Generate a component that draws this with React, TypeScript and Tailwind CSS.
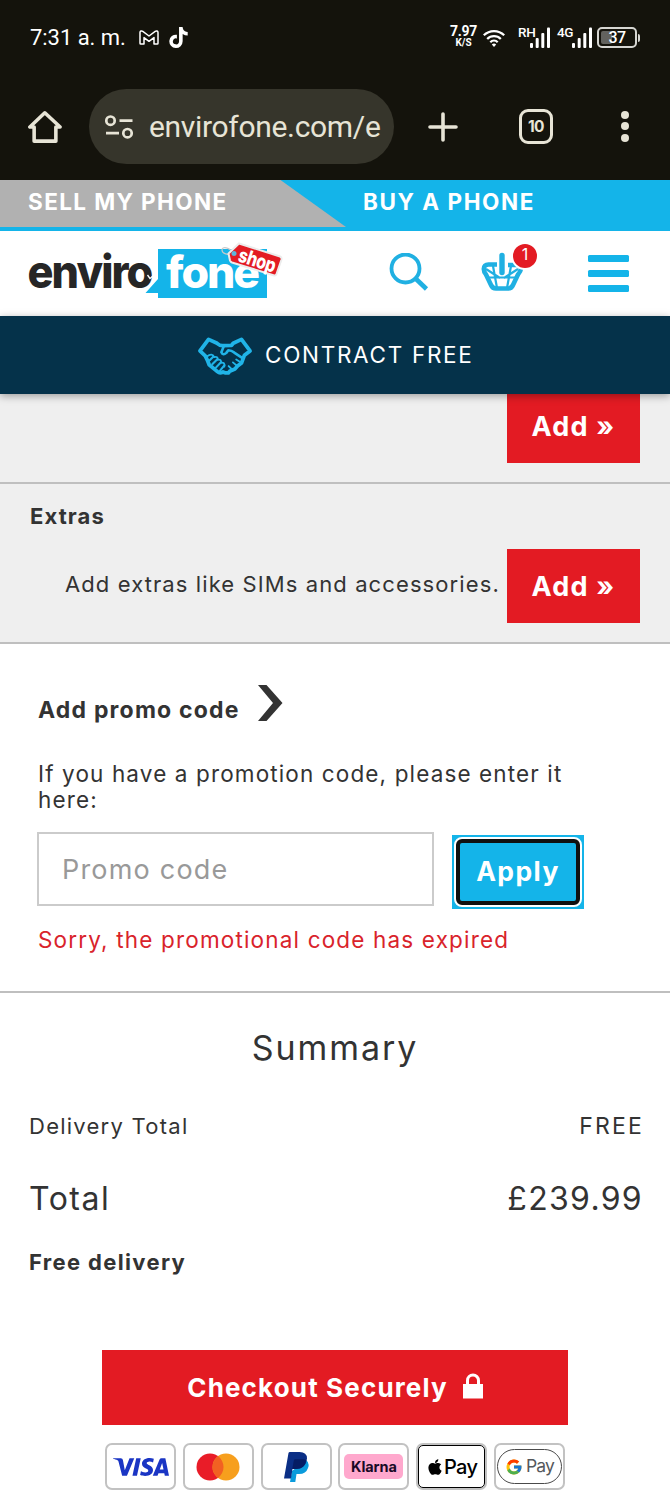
import type { ReactNode } from "react";
import { FaApple, FaTiktok } from "react-icons/fa";
import { FcGoogle } from "react-icons/fc";
import { SiVisa } from "react-icons/si";

const Signal = ({ label, className }: { label: string; className: string }) => (
  <div className={`relative h-[21px] ${className}`}>
    <span className="absolute left-0 top-0 text-[13.5px] leading-[11px] tracking-[-0.3px] font-medium">
      {label}
    </span>
    <svg
      viewBox="0 0 20 21"
      fill="currentColor"
      className="absolute right-0 bottom-0 w-5 h-[21px]"
    >
      <rect x="0" y="16" width="3" height="5" rx="1" />
      <rect x="5.7" y="11" width="3" height="10" rx="1" />
      <rect x="11.3" y="6" width="3" height="15" rx="1" />
      <rect x="17" y="0.5" width="3" height="20.5" rx="1" />
    </svg>
  </div>
);

const StatusBar = () => (
  <div className="flex h-[75px] items-center pl-[30px] pr-[30px] text-white">
    <span className="w-[109px] text-[22px] leading-[26px] tracking-[-0.05px] whitespace-nowrap">
      7:31 a. m.
    </span>
    <svg
      viewBox="0 0 20 15"
      fill="none"
      stroke="currentColor"
      strokeWidth="1.5"
      strokeLinejoin="round"
      className="w-5 h-[15px]"
    >
      <path d="M1 13.2V2.6C1 1 2.6.5 3.8 1.4L10 6l6.2-4.6C17.4.5 19 1 19 2.6V13.2q0 .8-.8.8H15V7.6L10 11.3 5 7.6V14H1.8Q1 14 1 13.2Z" />
    </svg>
    <FaTiktok className="ml-[10px] w-[19px] h-[21px]" />
    <div className="ml-auto flex items-center">
      <div className="w-[27px] pb-[3px] text-center font-bold">
        <div className="text-[14px] leading-[13px] tracking-[-0.3px]">7.97</div>
        <div className="text-[10px] leading-[9px]">K/S</div>
      </div>
      <svg
        viewBox="0 0 22 18"
        fill="none"
        stroke="currentColor"
        strokeWidth="2.3"
        className="ml-[6px] w-[22px] h-[18px]"
      >
        <path d="M.8 6.3a14.5 14.5 0 0 1 20.4 0M4.2 10a9.7 9.7 0 0 1 13.6 0M7.3 13.2a5.3 5.3 0 0 1 7.4 0" />
        <path d="m11 18-2.200-2.400a3 3 0 0 1 4.400 0Z" fill="currentColor" stroke="none" />
      </svg>
      <Signal label="RH" className="ml-[13px] w-[32px]" />
      <Signal label="4G" className="ml-[7px] w-[35px]" />
      <div className="relative ml-[5px] flex h-[21px] w-[40px] items-center justify-center rounded-[5px] border-2 border-[#d6d6d2]">
        <span className="absolute left-[2px] top-[2px] h-[13px] w-[11px] rounded-[2px] bg-[#62625e]" />
        <span className="relative text-[16px] leading-none font-medium tracking-[-0.5px]">37</span>
      </div>
      <span className="ml-px h-[8px] w-[2px] rounded-r bg-[#d6d6d2]" />
    </div>
  </div>
);

const BrowserBar = () => (
  <div className="flex h-[105px] items-start pl-[28px] pt-[14px] text-[#e7e4d6]">
    <svg
      viewBox="0 0 36 36"
      fill="none"
      stroke="currentColor"
      strokeWidth="3.8"
      strokeLinejoin="round"
      className="mt-[20px] w-[34px] h-[35px]"
    >
      <path d="M2 18.5h4.5V33.5h23V18.5H34L17.8 3.500Z" />
    </svg>
    <div className="ml-[27px] flex h-[75px] w-[305px] items-center rounded-full bg-[#36352b] pl-[16px]">
      <svg
        viewBox="0 0 28 24"
        fill="none"
        stroke="currentColor"
        strokeWidth="2.7"
        className="w-[28px] h-[24px]"
      >
        <circle cx="5.5" cy="5.7" r="4.2" />
        <circle cx="22.5" cy="18.2" r="4.2" />
        <path d="M14.500 5.700H27.500M1 18.200h13" />
      </svg>
      <span className="ml-[16px] text-[30px] leading-[40px] tracking-[-0.32px] whitespace-nowrap">
        envirofone.com/e
      </span>
    </div>
    <svg
      viewBox="0 0 30 30"
      stroke="currentColor"
      strokeWidth="3.6"
      strokeLinecap="round"
      className="ml-[34px] mt-[23px] w-[30px] h-[30px]"
    >
      <path d="M15 2v26M2 15h26" />
    </svg>
    <div className="ml-[61px] mt-[20px] flex h-[35px] w-[34px] items-center justify-center rounded-[9px] border-[3.5px] border-current font-[Inter] text-[15.5px] font-bold tracking-[-0.5px]">
      10
    </div>
    <div className="ml-[68px] mt-[22px] flex flex-col gap-[3.3px]">
      <span className="size-[8px] rounded-full bg-current" />
      <span className="size-[8px] rounded-full bg-current" />
      <span className="size-[8px] rounded-full bg-current" />
    </div>
  </div>
);

const ShopTabs = () => (
  <div className="relative flex h-[51px] border-b-4 border-[#14b4e9] bg-[#14b4e9] text-[22.5px] leading-[44px] font-bold text-white">
    <svg viewBox="0 0 346 47" className="absolute left-0 top-0 w-[346px] h-[47px]">
      <path d="M0 0h280.500L346 47H0Z" fill="#b1b1b1" />
    </svg>
    <span className="relative w-[335px] pl-[28px] tracking-[1.4px]">SELL MY PHONE</span>
    <span className="relative pl-[28px] tracking-[1.55px]">BUY A PHONE</span>
  </div>
);

const Logo = () => (
  <svg viewBox="0 0 256 60" className="w-[256px] h-[60px] overflow-visible font-[Inter]">
    <path d="M130 7h109v49H130v-5H117.500L130 37Z" fill="#14b4e9" />
    <text
      x="-0.5"
      y="46.3"
      fontSize="46"
      fontWeight="800"
      fill="#262626"
      stroke="#fff"
      strokeWidth="2"
      paintOrder="stroke"
      letterSpacing="-2"
      textLength="124"
      lengthAdjust="spacingAndGlyphs"
    >
      enviro
    </text>
    {/* arrow notch on the right side of the o */}
    <path d="m119.500 33 2.500 3.500 4-3.500" fill="none" stroke="#fff" strokeWidth="1.3" />
    <text
      x="138"
      y="46"
      fontSize="44"
      fontWeight="800"
      fill="#fff"
      letterSpacing="-2"
      textLength="92"
      lengthAdjust="spacingAndGlyphs"
    >
      fone
    </text>
    <path d="M207 12c-6-7-13-8-13-4s6 5 13 5" fill="none" stroke="#c9c9c9" strokeWidth="1.2" />
    <path
      d="m211 1.500 41 13q2 1 1.500 3l-5 14.500q-.7 2-3 1.300L204 20.500q-1.500-.5-2-2l-1.500-7Z"
      fill="#e31b23"
      stroke="#ececec"
      strokeWidth="2"
    />
    <circle cx="206" cy="11.500" r="2.5" fill="#5db5dc" />
    <text
      x="209"
      y="19"
      fontSize="20"
      fontWeight="800"
      fill="#fff"
      letterSpacing="-0.5"
      textLength="38"
      lengthAdjust="spacingAndGlyphs"
      transform="rotate(18 209 19)"
    >
      shop
    </text>
  </svg>
);

const ShopHeader = () => (
  <div className="flex h-[85px] items-start bg-white pl-[28px]">
    <div className="mt-[11px]">
      <Logo />
    </div>
    <svg
      viewBox="0 0 40 38"
      fill="none"
      stroke="#20b0e2"
      strokeWidth="3.8"
      className="ml-[105px] mt-[22px] w-[40px] h-[38px]"
    >
      <circle cx="16.5" cy="15.5" r="14" />
      <path d="m26 25 11.500 11" strokeWidth="4.6" />
    </svg>
    <div className="relative ml-[51px] mt-[20px]">
      <svg
        viewBox="0 0 44 40"
        fill="none"
        stroke="#20b0e2"
        strokeWidth="4.6"
        strokeLinejoin="round"
        className="w-[44px] h-[40px]"
      >
        <path d="M17 13.500H8.500q-4.700 0-4.700 4.500 0 3 2.200 5.500l5 10.500q1.500 3.500 5 3.500h12q3.500 0 5-3.500l5-10.500q2.700-3 3-6-1-3.500-4-3.500h-9" />
        <path d="M7 26.500h30M13 15l4 22M31 15l-4 22M6 18l14 9M38 18 24 27" strokeWidth="2.2" />
        <path d="M22 3v20" stroke="#fff" strokeWidth="8.5" />
        <path d="M22 4.500v17" strokeWidth="5.4" strokeLinecap="round" />
      </svg>
      <span className="absolute left-[33px] -top-[7.500px] flex size-[24px] items-center justify-center rounded-full bg-[#e31b23] pb-[3px] text-[16px] leading-none text-white ring-2 ring-white">
        1
      </span>
    </div>
    <div className="ml-[64px] mt-[24px] flex flex-col gap-[8px]">
      <span className="h-[7px] w-[41px] rounded-[1.5px] bg-[#14b4e9]" />
      <span className="h-[7px] w-[41px] rounded-[1.5px] bg-[#14b4e9]" />
      <span className="h-[7px] w-[41px] rounded-[1.5px] bg-[#14b4e9]" />
    </div>
  </div>
);

const Banner = () => (
  <div className="relative flex h-[78px] items-center bg-[#05324a] pl-[197px] text-[22.5px] text-white shadow-[0_2px_8px_rgba(0,0,0,0.35)]">
    <svg
      viewBox="50 60 170 122"
      fill="none"
      stroke="#20b4e8"
      strokeWidth="11.5"
      strokeLinejoin="round"
      strokeLinecap="round"
      className="w-[56px] h-[41px]"
    >
      <path d="m59 107 26-35 26 12q8 7 16 7l28-1 5-6 25-12 26 35-17 13-9 24-12 9-8 9-16 7-4 5h-8l-8-3q-10 5-17-1l-25-21-6-15-6-12Z" />
      <path d="m132 91-8 20q5 11 15 2l6-8q10 0 18 7l24 16" strokeWidth="8" />
      <path d="m100 124-13 13M111 133l-14 14M122 142l-14 15M133 151l-13 16" strokeWidth="6.5" />
      <path
        d="m80 124q16-12 22 2 12-4 11 8 12-2 10 9 13-2 10 12M181 141l-12-8M172 153l-13-11M158 165l-12-12"
        strokeWidth="5.5"
      />
    </svg>
    <span className="ml-[12px] tracking-[1.7px]">CONTRACT FREE</span>
  </div>
);

const RedButton = ({ children, className }: { children: ReactNode; className: string }) => (
  <button className={`bg-[#e31b23] font-bold text-white ${className}`}>{children}</button>
);

const Extras = () => (
  <div className="bg-[#efefef]">
    <div className="flex h-[90px] justify-end border-b-2 border-[#bfbfbf] pr-[30px]">
      <RedButton className="h-[69px] w-[133px] pb-[3px] text-[27px] tracking-[1.2px]">Add »</RedButton>
    </div>
    <div className="h-[160px] border-b-2 border-[#bfbfbf] pt-[18px] pr-[30px]">
      <div className="pl-[30px] text-[22px] leading-[28px] font-bold tracking-[1.1px]">Extras</div>
      <div className="mt-[19px] flex items-start justify-end">
        <span className="w-[442px] pt-[21px] text-[22px] leading-[28px] tracking-[1.1px] whitespace-nowrap">
          Add extras like SIMs and accessories.
        </span>
        <RedButton className="h-[74px] w-[133px] pt-[2px] text-[27px] tracking-[1.2px]">Add »</RedButton>
      </div>
    </div>
  </div>
);

const PromoCode = () => (
  <div className="h-[349px] border-b-2 border-[#bfbfbf] bg-white pl-[38px] pt-[41px]">
    <div className="flex items-start">
      <span className="w-[219px] pt-[11px] text-[23px] leading-[28px] font-bold tracking-[1.2px] whitespace-nowrap">
        Add promo code
      </span>
      <svg viewBox="0 0 26 36" className="w-[26px] h-[36px]">
        <path d="M1 0h8.500L25.500 18 9.500 36H1L16 18Z" fill="#333" />
      </svg>
    </div>
    <p className="mt-[37px] w-[560px] text-[22.5px] leading-[26px] tracking-[1.13px]">
      If you have a promotion code, please enter it
      <br />
      here:
    </p>
    <div className="mt-[19px] -ml-px flex items-start">
      <input
        placeholder="Promo code"
        className="h-[74px] w-[397px] border-2 border-[#cbcbcb] px-[23px] text-[27px] tracking-[1.2px] placeholder:text-[#999]"
      />
      <button className="ml-[18px] mt-[3px] h-[74px] w-[132px] bg-[#14b4e9] p-[2px] text-[26.5px] font-bold tracking-[1.4px] text-white">
        <span className="flex h-full items-center justify-center rounded-[8px] border-2 border-white bg-white">
          <span className="flex h-full w-full items-center justify-center rounded-[6px] border-4 border-[#101010] bg-[#14b4e9]">
            Apply
          </span>
        </span>
      </button>
    </div>
    <p className="mt-[17px] text-[22.5px] leading-[28px] tracking-[1.17px] text-[#d9232b]">
      Sorry, the promotional code has expired
    </p>
  </div>
);

const PayCard = ({ children }: { children: ReactNode }) => (
  <div className="flex h-[47px] w-[71px] items-center justify-center rounded-[7px] border-2 border-[#c2c2c2] bg-white">
    {children}
  </div>
);

const Payments = () => (
  <div className="mt-[18px] flex gap-[6.8px] pl-[105px]">
    <PayCard>
      <SiVisa className="size-[56px] shrink-0 text-[#1a35c4]" />
    </PayCard>
    <PayCard>
      <svg viewBox="0 0 44 28" className="w-[44px] h-[28px]">
        <circle cx="14" cy="14" r="13.5" fill="#e91c28" />
        <circle cx="30" cy="14" r="13.5" fill="#f79f1d" />
        <path d="M22 3.100a13.500 13.500 0 0 1 0 21.800 13.500 13.500 0 0 1 0-21.800Z" fill="#f26122" />
      </svg>
    </PayCard>
    <PayCard>
      <svg viewBox="0 0 25 30" className="w-[25px] h-[30px]">
        <path d="M22 8q4 3 2 8-2 6-9 6h-2.500L11.300 30H6l2-11Z" fill="#0a9bdc" />
        <path d="M4.500 1Q4.700 0 6 0h9.500Q23 0 23 6.500 22 17 12 17H8.500L7 26.500H0Z" fill="#0a2e85" />
        <path d="M22.300 8Q21 17 12 17H8.300L9.800 8.500Q10 7.300 11.300 7.300h7.700q2 0 3.300.7Z" fill="#051c64" />
      </svg>
    </PayCard>
    <PayCard>
      <span className="flex h-[25px] w-[59px] items-center justify-center rounded-[5px] bg-[#ffa8cd] text-[14.5px] font-bold tracking-[-0.1px] text-[#190a26]">
        Klarna
      </span>
    </PayCard>
    <PayCard>
      <span className="flex h-[43px] w-[67px] shrink-0 items-center justify-center rounded-[5px] border-[1.5px] border-black text-[20px] font-medium text-black">
        <FaApple className="size-[18px]" />
        <span className="tracking-[-0.7px]">Pay</span>
      </span>
    </PayCard>
    <PayCard>
      <span className="flex h-[35px] w-[65px] shrink-0 items-center justify-center gap-[3px] rounded-full border-[1.5px] border-[#4a4a4a] text-[17.5px] text-[#55585c]">
        <FcGoogle className="size-[18px]" />
        <span className="tracking-[-0.8px]">Pay</span>
      </span>
    </PayCard>
  </div>
);

const Summary = () => (
  <div className="bg-white">
    <h2 className="pt-[33px] text-center text-[34px] leading-[44px] tracking-[1.9px]">Summary</h2>
    <div className="mt-[42px] flex justify-between pl-[29px] pr-[27px] text-[22px] leading-[28px]">
      <span className="tracking-[1.25px]">Delivery Total</span>
      <span className="text-[23px] tracking-[2.2px] -mr-px">FREE</span>
    </div>
    <div className="mt-[37px] flex justify-between pl-[29px] pr-[27px] text-[32px] leading-[44px] tracking-[1.3px]">
      <span className="tracking-[1.5px]">Total</span>
      <span>£239.99</span>
    </div>
    <div className="mt-[27px] pl-[29px] text-[22px] leading-[28px] font-bold tracking-[1.35px]">Free delivery</div>
    <RedButton className="mt-[74px] ml-[102px] flex h-[75px] w-[466px] items-center justify-center text-[26px] tracking-[1.15px]">
      Checkout Securely
      <svg viewBox="0 0 20 26" className="ml-[15px] mb-[3px] w-[20px] h-[26px]">
        <path d="M0 11h20v14.500H0Z" fill="#fff" />
        <path d="M4.500 12V7.500a5.500 5.500 0 0 1 11 0V12" fill="none" stroke="#fff" strokeWidth="3" />
      </svg>
    </RedButton>
    <Payments />
  </div>
);

const App = () => (
  <div className="h-[1500px] w-[670px] overflow-hidden bg-white font-[Inter,sans-serif] text-[#333]">
    <div className="bg-[#14130c] font-[Roboto,sans-serif]">
      <StatusBar />
      <BrowserBar />
    </div>
    <ShopTabs />
    <ShopHeader />
    <Banner />
    <Extras />
    <PromoCode />
    <Summary />
  </div>
);

export default App;
